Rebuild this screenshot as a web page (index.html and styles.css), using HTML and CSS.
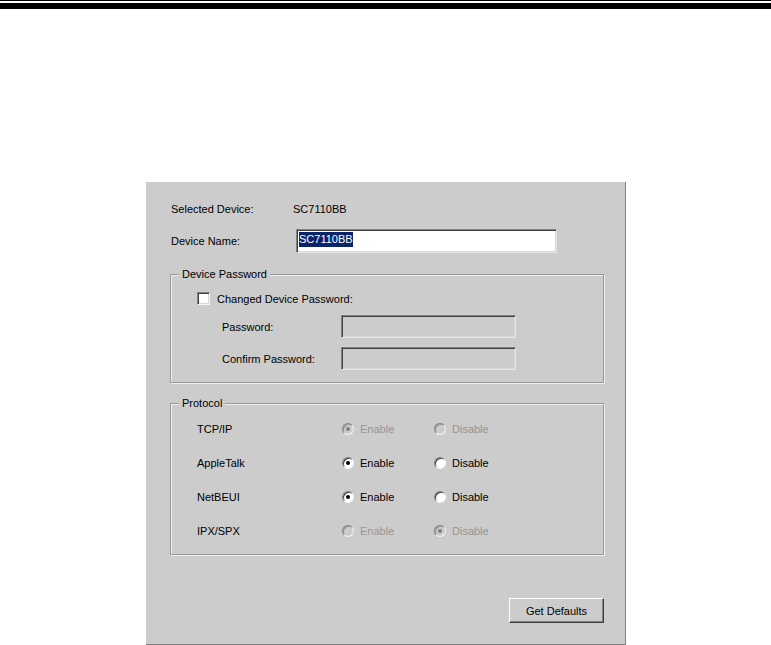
FILE: index.html
```html
<!DOCTYPE html>
<html lang="en">
  <head>
    <meta charset="UTF-8" />
    <meta name="viewport" content="width=device-width, initial-scale=1.0" />
    <title>Device Settings</title>
    <link rel="stylesheet" href="styles.css">
  </head>
  <body>
    <div class="rule-thin"></div>
    <div class="rule-thick"></div>

    <div class="panel">
      <div class="row row-info">
        <span class="label label-info">Selected Device:</span>
        <span>SC7110BB</span>
      </div>

      <div class="row row-name">
        <span class="label label-name">Device Name:</span>
        <div class="field field-name"><span class="selected">SC7110BB</span></div>
      </div>

      <div class="group group-password">
        <span class="group-title">Device Password</span>
        <div class="check-row">
          <span class="checkbox"></span>
          <span>Changed Device Password:</span>
        </div>
        <div class="pw-row">
          <span class="pw-label">Password:</span>
          <div class="field field-pw"></div>
        </div>
        <div class="pw-row">
          <span class="pw-label">Confirm Password:</span>
          <div class="field field-pw"></div>
        </div>
      </div>

      <div class="group group-protocol">
        <span class="group-title">Protocol</span>
        <div class="proto-row">
          <span class="proto-name">TCP/IP</span>
          <span class="option disabled"><span class="radio on"></span>Enable</span>
          <span class="option disabled"><span class="radio"></span>Disable</span>
        </div>
        <div class="proto-row">
          <span class="proto-name">AppleTalk</span>
          <span class="option"><span class="radio on"></span>Enable</span>
          <span class="option"><span class="radio"></span>Disable</span>
        </div>
        <div class="proto-row">
          <span class="proto-name">NetBEUI</span>
          <span class="option"><span class="radio on"></span>Enable</span>
          <span class="option"><span class="radio"></span>Disable</span>
        </div>
        <div class="proto-row">
          <span class="proto-name">IPX/SPX</span>
          <span class="option disabled"><span class="radio"></span>Enable</span>
          <span class="option disabled"><span class="radio on"></span>Disable</span>
        </div>
      </div>

      <div class="actions">
        <button class="btn">Get Defaults</button>
      </div>
    </div>
  </body>
</html>
```

FILE: styles.css
```css
* {
  box-sizing: border-box;
}

body {
  margin: 0;
  background: #fff;
  font-family: "Liberation Sans", Arial, sans-serif;
  font-size: 11px;
  color: #000;
}

.rule-thin {
  height: 1px;
  background: #000;
  margin-bottom: 2px;
}

.rule-thick {
  height: 6px;
  background: #000;
}

.panel {
  margin: 173px 0 0 146px;
  width: 480px;
  height: 463px;
  background: #cccccc;
  border-right: 1px solid #808080;
  border-bottom: 1px solid #808080;
  padding: 20px 0 0 24px;
}

.row {
  display: flex;
  align-items: center;
  padding-left: 1px;
}

.row-info {
  height: 14px;
}

.label-info {
  width: 122px;
}

.row-name {
  margin-top: 13px;
}

.label-name {
  width: 125px;
}

.field {
  border: 1px solid;
  border-color: #808080 #e6e6e6 #e6e6e6 #808080;
  box-shadow: inset 1px 1px 0 #404040, inset -1px -1px 0 #d8d8d8;
}

.field-name {
  width: 261px;
  height: 24px;
  background: #fff;
  padding: 2px 0 0 2px;
}

.selected {
  display: inline-block;
  background: #0a246a;
  color: #fff;
  padding: 1px 0 1px 0;
  line-height: 13px;
}

.group {
  position: relative;
  width: 434px;
  border: 1px solid #999;
  box-shadow: 1px 1px 0 #eeeeee, inset 1px 1px 0 #eeeeee;
}

.group-title {
  position: absolute;
  top: -7px;
  left: 8px;
  padding: 0 3px;
  background: #cccccc;
  line-height: 13px;
}

.group-password {
  margin-top: 21px;
  height: 109px;
  padding: 17px 0 0 26px;
}

.check-row {
  display: flex;
  align-items: center;
  gap: 7px;
  height: 13px;
}

.checkbox {
  width: 13px;
  height: 13px;
  background: #fff;
  border: 1px solid;
  border-color: #808080 #f4f4f4 #f4f4f4 #808080;
  box-shadow: inset 1px 1px 0 #404040, inset -1px -1px 0 #d8d8d8;
}

.pw-row {
  display: flex;
  align-items: center;
  margin-top: 10px;
}

.pw-row + .pw-row {
  margin-top: 9px;
}

.pw-label {
  width: 144px;
  padding-left: 25px;
}

.field-pw {
  width: 175px;
  height: 23px;
  background: #cccccc;
}

.group-protocol {
  margin-top: 20px;
  height: 152px;
  padding: 8px 0 0 26px;
}

.proto-row {
  display: flex;
  align-items: center;
  height: 34px;
}

.proto-name {
  width: 145px;
}

.option {
  display: flex;
  align-items: center;
  gap: 6px;
  width: 92px;
}

.option.disabled {
  color: #959595;
}

.radio {
  position: relative;
  width: 12px;
  height: 12px;
  border-radius: 50%;
  background: #fff;
  border: 1px solid;
  border-color: #808080 #f4f4f4 #f4f4f4 #808080;
  box-shadow: inset 1px 1px 0 #404040;
}

.radio.on::after {
  content: "";
  position: absolute;
  left: 3px;
  top: 3px;
  width: 4px;
  height: 4px;
  border-radius: 50%;
  background: #000;
}

.disabled .radio {
  background: #cccccc;
  box-shadow: inset 1px 1px 0 #9a9a9a;
}

.disabled .radio.on::after {
  background: #808080;
}

.actions {
  display: flex;
  justify-content: flex-end;
  width: 434px;
  margin-top: 43px;
}

.btn {
  width: 95px;
  height: 25px;
  background: #cccccc;
  font-family: "Liberation Sans", Arial, sans-serif;
  font-size: 11px;
  color: #000;
  border: 1px solid;
  border-color: #fff #404040 #404040 #fff;
  box-shadow: inset -1px -1px 0 #808080;
  padding: 0;
}
```
